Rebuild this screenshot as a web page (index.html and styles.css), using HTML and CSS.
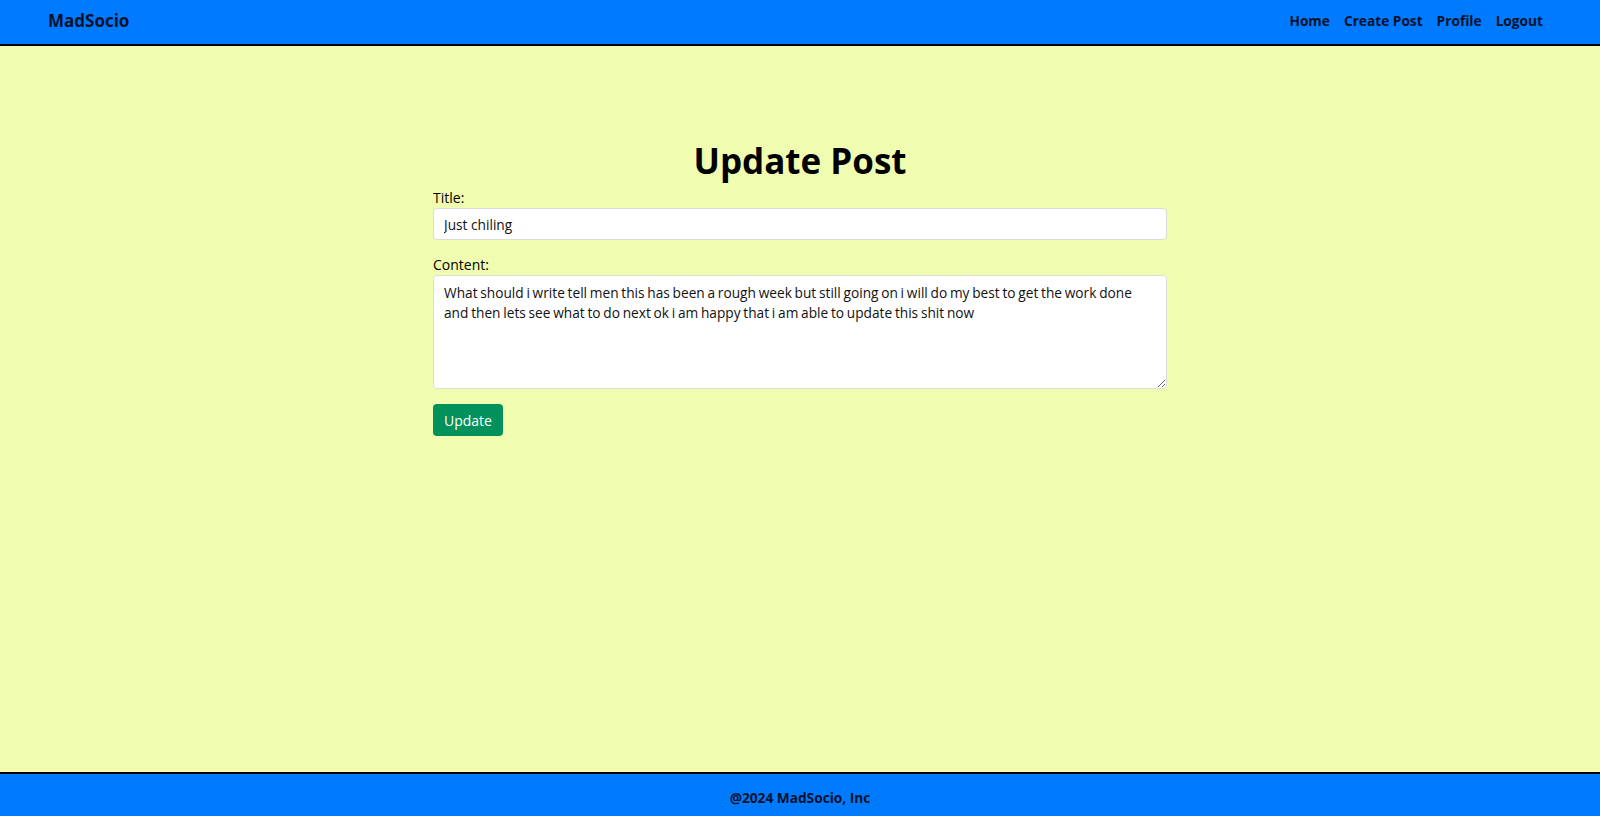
FILE: index.html
```html
<!DOCTYPE html>
<html lang="en">
<head>
<meta charset="utf-8">
<title>Update Post - MadSocio</title>
<link rel="stylesheet" href="styles.css">
</head>
<body>
<header class="navbar">
  <a class="brand" href="#">MadSocio</a>
  <nav class="nav">
    <a href="#">Home</a>
    <a href="#">Create Post</a>
    <a href="#">Profile</a>
    <a href="#">Logout</a>
  </nav>
</header>
<main class="main">
  <div class="container">
    <h1 class="title">Update Post</h1>
    <form class="form">
      <label class="label" for="title">Title:</label>
      <input class="input" id="title" type="text" value="Just chiling">
      <label class="label label-content" for="content">Content:</label>
      <textarea class="textarea" id="content">What should i write tell men this has been a rough week but still going on i will do my best to get the work done and then lets see what to do next ok i am happy that i am able to update this shit now</textarea>
      <div class="actions"><button class="btn" type="button">Update</button></div>
    </form>
  </div>
</main>
<footer class="footer">@2024 MadSocio, Inc</footer>
</body>
</html>
```
FILE: styles.css
```css
* { box-sizing: border-box; }
html, body { height: 100%; }
body {
  margin: 0;
  font-family: "Open Sans", "Noto Sans", sans-serif;
  font-size: 14px;
  color: #000;
  background: #f0fdb1;
  display: flex;
  flex-direction: column;
  min-height: 100vh;
}
.navbar {
  height: 46px;
  background: #007bff;
  border-bottom: 2px solid #000;
  display: flex;
  align-items: center;
  justify-content: space-between;
  padding: 0 57px 3px 48px;
  flex-shrink: 0;
}
.brand {
  font-weight: 700;
  font-size: 17px;
  color: #00112a;
  text-decoration: none;
}
.nav { display: flex; gap: 14px; }
.nav a {
  font-weight: 700;
  font-size: 13.7px;
  color: #00112a;
  text-decoration: none;
}
.main { flex: 1; }
.container {
  width: 734px;
  margin: 0 auto;
  padding-top: 92px;
}
.title {
  margin: 0 0 4px;
  text-align: center;
  font-size: 35px;
  font-weight: 700;
  line-height: 46px;
}
.form { display: flex; flex-direction: column; }
.label { font-size: 14px; line-height: 20px; }
.label-content { margin-top: 15px; }
.input, .textarea {
  font-family: inherit;
  font-size: 13.7px;
  color: #111;
  background: #fff;
  border: 1px solid #dcdcdc;
  border-radius: 4px;
  padding: 0 10px;
  width: 100%;
}
.input { height: 32px; }
.textarea {
  height: 114px;
  word-spacing: -0.8px;
  padding: 7px 10px 6px 10px;
  line-height: 20px;
  resize: vertical;
}
.actions { margin-top: 15px; }
.btn {
  font-family: inherit;
  font-size: 14px;
  color: #fff;
  background: #01925c;
  border: none;
  border-radius: 4px;
  height: 32px;
  padding: 0 11px;
}
.footer {
  height: 44px;
  flex-shrink: 0;
  background: #007bff;
  border-top: 2px solid #000;
  padding-top: 4px;
  display: flex;
  align-items: center;
  justify-content: center;
  font-weight: 700;
  font-size: 13.7px;
  color: #00112a;
}
```
